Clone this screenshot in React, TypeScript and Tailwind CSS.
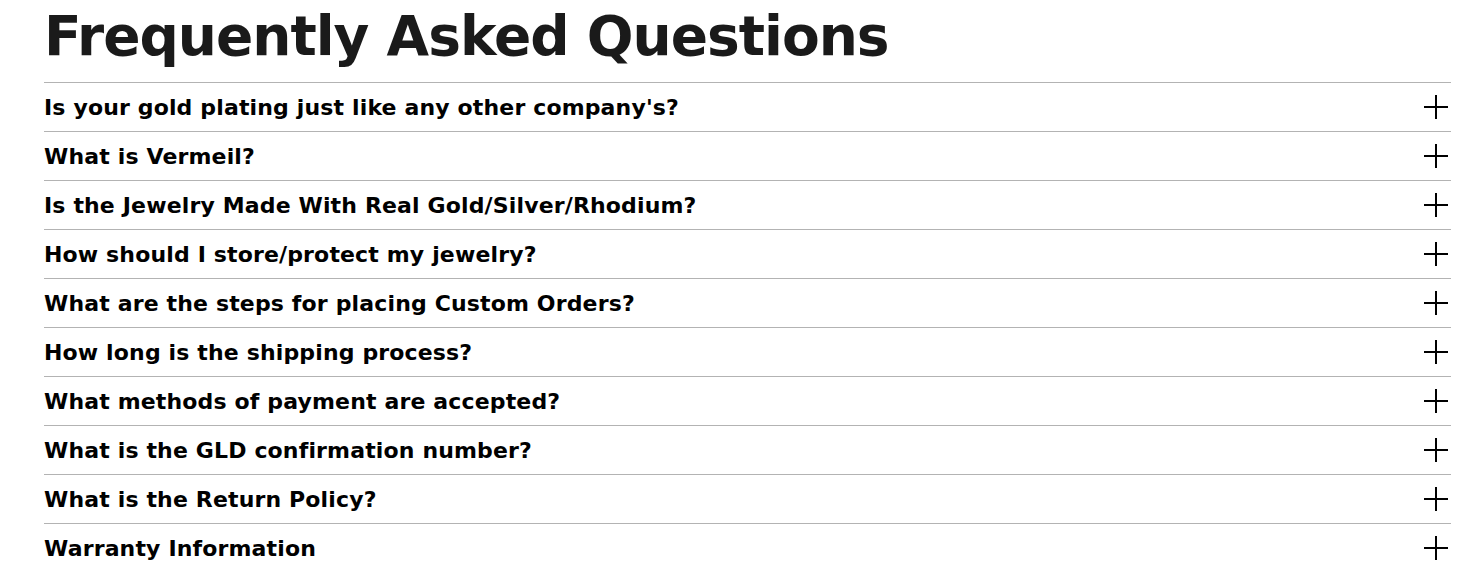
const questions = [
  "Is your gold plating just like any other company's?",
  "What is Vermeil?",
  "Is the Jewelry Made With Real Gold/Silver/Rhodium?",
  "How should I store/protect my jewelry?",
  "What are the steps for placing Custom Orders?",
  "How long is the shipping process?",
  "What methods of payment are accepted?",
  "What is the GLD confirmation number?",
  "What is the Return Policy?",
  "Warranty Information",
];

function PlusIcon() {
  return (
    <svg width="24" height="24" viewBox="0 0 24 24" aria-hidden className="shrink-0">
      <path d="M12 0v24M0 12h24" stroke="black" strokeWidth="2" fill="none" />
    </svg>
  );
}

export default function App() {
  return (
    <div className="min-h-screen bg-white font-['DejaVu_Sans',sans-serif]">
      <section className="ml-[44px] w-[1407px]">
        <h1 className="h-[82px] pt-[1px] text-[55px] font-extrabold leading-[70px] tracking-[-1px] text-[#1a1a1a]">
          Frequently Asked Questions
        </h1>
        <ul>
          {questions.map((q) => (
            <li key={q} className="border-t border-[#b3b3b3]">
              <button
                type="button"
                className="flex h-[48px] w-full items-center justify-between pr-[3px] text-left"
              >
                <span className="text-[22px] font-bold tracking-[0.15px] text-black">{q}</span>
                <PlusIcon />
              </button>
            </li>
          ))}
        </ul>
      </section>
    </div>
  );
}
